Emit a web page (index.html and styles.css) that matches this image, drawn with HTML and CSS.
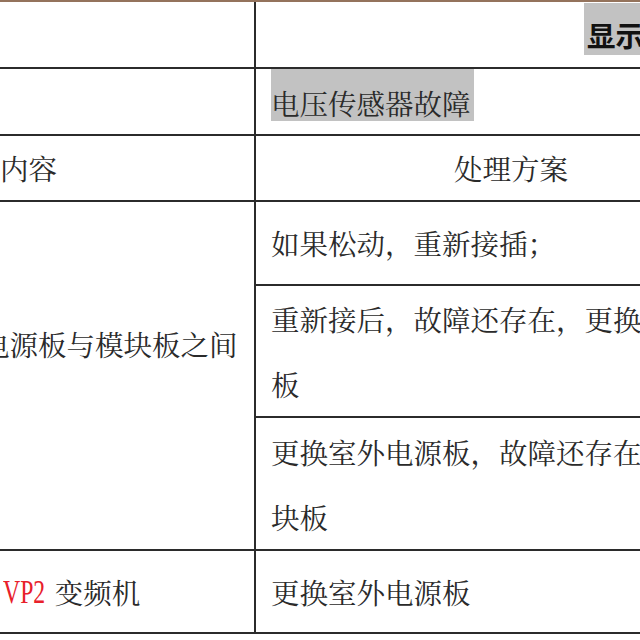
FILE: index.html
```html
<!DOCTYPE html>
<html lang="zh-CN">
<head>
<meta charset="utf-8">
<title>电压传感器故障</title>
<link rel="stylesheet" href="styles.css">
</head>
<body>
<div class="page">
  <div class="sheet">
    <div class="cell left row1"></div>
    <div class="cell right row1 head-cell"><span class="hl hl-head">显示</span></div>

    <div class="cell left row2"></div>
    <div class="cell right row2 fault-cell"><span class="hl hl-fault">电压传感器故障</span></div>

    <div class="cell left row3 mid"><span class="clip-content">内容</span></div>
    <div class="cell right row3 mid centered">处理方案</div>

    <div class="cell left merged"><span class="clip-board">电源板与模块板之间</span></div>
    <div class="cell right row4a mid">如果松动，重新接插；</div>
    <div class="cell right row4b mid multi">重新接后，故障还存在，更换模<br>板</div>
    <div class="cell right row4c mid multi">更换室外电源板，故障还存在，更换模<br>块板</div>

    <div class="cell left row5 mid"><span class="clip-model"><span class="red">VP2</span>变频机</span></div>
    <div class="cell right row5 mid">更换室外电源板</div>
  </div>
</div>
</body>
</html>
```

FILE: styles.css
```css
* { box-sizing: border-box; }

html, body {
  margin: 0;
  padding: 0;
  background: #ffffff;
}

.page {
  width: 640px;
  height: 640px;
  overflow: hidden;
  background: #ffffff;
}

.sheet {
  width: 800px;
  display: grid;
  grid-template-columns: 256px 544px;
  grid-template-rows: 67px 67px 66px 84px 132px 133px 83px;
  border-top: 2px solid #94735c;
  font-family: "Noto Serif CJK SC", "Noto Sans CJK SC", sans-serif;
  font-size: 28.5px;
  color: #2a2a2a;
}

.cell {
  border-bottom: 2px solid #2b2b2b;
  overflow: hidden;
  white-space: nowrap;
  line-height: 36px;
}

.left {
  border-right: 2px solid #2b2b2b;
}

.right {
  padding-left: 15px;
}

.mid {
  display: flex;
  align-items: center;
}

.multi {
  line-height: 65px;
}

.centered {
  padding-left: 198px;
}

.merged {
  grid-row: 4 / span 3;
  padding-top: 109px;
  line-height: 65px;
}

/* highlighted (shaded) text */
.hl {
  display: inline-block;
  background: #c2c2c2;
  line-height: 36px;
}

.head-cell {
  padding-top: 1px;
  padding-left: 328px;
}

.hl-head {
  padding: 14px 0 2px 3px;
  font-family: "Noto Sans CJK SC", sans-serif;
  font-weight: 700;
  color: #111111;
  width: 80px;
}

.fault-cell {
  padding-top: 0;
}

.hl-fault {
  padding: 16px 3px 0 0;
}

/* left-column text partially cut by the page edge */
.clip-content {
  display: block;
}

.clip-board {
  display: block;
  margin-left: -19px;
}

.clip-model {
  display: flex;
  align-items: center;
  margin-left: 3px;
}

.red {
  display: inline-block;
  font-family: "Liberation Serif", serif;
  font-size: 33px;
  color: #e8202a;
  transform: scaleX(0.72);
  transform-origin: left center;
  margin-right: -7px;
}
```
